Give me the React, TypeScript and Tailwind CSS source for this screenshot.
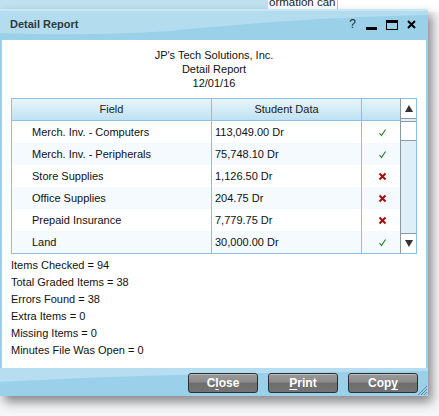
import React from "react";

const rows = [
  { f: "Merch. Inv. - Computers", d: "113,049.00 Dr", ok: true },
  { f: "Merch. Inv. - Peripherals", d: "75,748.10 Dr", ok: true },
  { f: "Store Supplies", d: "1,126.50 Dr", ok: false },
  { f: "Office Supplies", d: "204.75 Dr", ok: false },
  { f: "Prepaid Insurance", d: "7,779.75 Dr", ok: false },
  { f: "Land", d: "30,000.00 Dr", ok: true },
];

const stats = [
  "Items Checked = 94",
  "Total Graded Items = 38",
  "Errors Found = 38",
  "Extra Items = 0",
  "Missing Items = 0",
  "Minutes File Was Open = 0",
];

function Check() {
  return (
    <svg width="9" height="9" viewBox="0 0 9 9">
      <path d="M1.5 5 L3.5 7.5 L7.5 1.5" fill="none" stroke="#2e7d32" strokeWidth="1.2" />
    </svg>
  );
}
function Cross() {
  return (
    <svg width="9" height="9" viewBox="0 0 9 9">
      <path d="M1.5 1.5 L7.5 7.5 M7.5 1.5 L1.5 7.5" fill="none" stroke="#a80d0d" strokeWidth="2" />
    </svg>
  );
}

function Btn({ pre, u, post }: { pre: string; u: string; post: string }) {
  return (
    <div className="w-[70px] h-[20px] rounded-[3px] border border-[#2f2f2f] bg-[linear-gradient(to_bottom,#9a9a9a_0%,#8a8a8a_45%,#6e6e6e_50%,#737373_100%)] shadow-[inset_0_1px_0_rgba(255,255,255,0.35)] flex items-center justify-center text-white font-bold text-[12px] leading-none">
      <span>
        {pre}
        <span className="underline underline-offset-2">{u}</span>
        {post}
      </span>
    </div>
  );
}

export default function App() {
  return (
    <div
      className="relative w-[439px] h-[416px] overflow-hidden bg-[#f4f6f7]"
      style={{ fontFamily: '"Liberation Sans", Arial, sans-serif' }}
    >
      {/* desktop behind */}
      <div className="absolute left-0 top-0 w-[439px] h-[12px] bg-[#bfe1f0]" />
      <div className="absolute left-[268px] top-0 w-[70px] h-[12px] bg-white border-r border-[#9bcbe2] overflow-hidden">
        <div className="whitespace-nowrap text-[11.5px] leading-[12px] text-[#222] -mt-[4px] pl-[1px]">ormation can</div>
      </div>
      <div className="absolute left-[338px] top-0 w-[101px] h-[12px] bg-white" />

      {/* window */}
      <div className="absolute left-0 top-[9px] w-[428px] h-[387px] flex flex-col bg-[#9ad0ea] shadow-[4px_6px_10px_rgba(0,0,0,0.45)]">
        {/* title bar */}
        <div className="relative h-[31px] shrink-0 flex items-center pl-[10px] pr-[12px] overflow-hidden">
          <svg className="absolute inset-0" width="428" height="31" viewBox="0 0 428 31" preserveAspectRatio="none">
            <rect width="428" height="31" fill="#9bd0e9" />
            <path d="M0 0 H428 V6 C330 8 250 14 170 22 C110 26 50 26 0 24 Z" fill="#b3dcef" />
            <path d="M0 0 H428 V2 H0 Z" fill="#c6e7f4" />
          </svg>
          <span className="relative text-[11px] font-bold text-[#2e3a40]">Detail Report</span>
          <div className="relative ml-auto flex items-center">
            <span className="text-[12px] text-[#222] mr-[10px] -mt-[2px]">?</span>
            <div className="w-[11px] h-[3px] bg-black mt-[8px] mr-[9px]" />
            <div className="w-[12px] h-[10px] border border-black border-t-[3px] mr-[9px]" />
            <svg width="9" height="9" viewBox="0 0 9 9">
              <path d="M1 1 L8 8 M8 1 L1 8" stroke="black" strokeWidth="2" />
            </svg>
          </div>
        </div>

        {/* content */}
        <div className="mx-[2px] bg-white h-[328px] shrink-0 flex flex-col">
          <div className="pt-[8px] text-center text-[11px] leading-[14px] text-[#111]">
            <div>JP's Tech Solutions, Inc.</div>
            <div>Detail Report</div>
            <div>12/01/16</div>
          </div>

          <div className="ml-[9px] mt-[8px] w-[406px] h-[156px] border border-[#87c2e2] flex">
            <div className="flex-1 flex flex-col">
              <div className="h-[22px] shrink-0 flex bg-[linear-gradient(to_bottom,#e8f5fb,#bfe1f2)] border-b border-[#87c2e2] text-[11px] text-[#222]">
                <div className="w-[200px] border-r border-[#87c2e2] flex items-center justify-center">Field</div>
                <div className="w-[150px] border-r border-[#87c2e2] flex items-center justify-center">Student Data</div>
                <div className="flex-1" />
              </div>
              {rows.map((r, i) => (
                <div
                  key={i}
                  className={`h-[22px] shrink-0 flex text-[11px] text-[#111] ${i % 2 === 1 ? "bg-[#f4fafd]" : "bg-white"}`}
                >
                  <div className="w-[200px] border-r border-[#87c2e2] flex items-center pl-[20px]">{r.f}</div>
                  <div className="w-[150px] border-r border-[#87c2e2] flex items-center pl-[3px]">{r.d}</div>
                  <div className="flex-1 flex items-center justify-center pl-[2px]">{r.ok ? <Check /> : <Cross />}</div>
                </div>
              ))}
            </div>
            {/* scrollbar */}
            <div className="w-[16px] shrink-0 flex flex-col bg-[#dfeff7] border-l border-[#8a9aa3]">
              <div className="h-[20px] bg-white border-b border-[#8a9aa3] flex items-center justify-center">
                <svg width="8" height="7" viewBox="0 0 8 7"><path d="M4 0 L8 7 H0 Z" fill="#333" /></svg>
              </div>
              <div className="h-[20px] mt-[2px] bg-white border-y border-[#8a9aa3]" />
              <div className="flex-1" />
              <div className="h-[20px] bg-white border-t border-[#8a9aa3] flex items-center justify-center">
                <svg width="8" height="7" viewBox="0 0 8 7"><path d="M0 0 H8 L4 7 Z" fill="#333" /></svg>
              </div>
            </div>
          </div>

          <div className="pl-[9px] pt-[3px] text-[11px] text-[#111]">
            {stats.map((s) => (
              <div key={s} className="h-[17px] leading-[17px]">{s}</div>
            ))}
          </div>
        </div>

        {/* footer */}
        <div className="relative flex-1 flex items-center justify-end gap-[10px] pr-[10px] overflow-hidden">
          <svg className="absolute inset-0" width="428" height="28" viewBox="0 0 428 28" preserveAspectRatio="none">
            <rect width="428" height="28" fill="#9ad0ea" />
            <path d="M0 0 H428 V3 C300 4 150 6 0 14 Z" fill="#b7def0" />
          </svg>
          <div className="relative flex gap-[10px] mt-[2px]">
            <Btn pre="C" u="l" post="ose" />
            <Btn pre="" u="P" post="rint" />
            <Btn pre="Cop" u="y" post="" />
          </div>
          <svg className="absolute right-[1px] bottom-[1px]" width="10" height="10" viewBox="0 0 10 10">
            <path d="M10 1 L1 10 M10 4 L4 10 M10 7 L7 10" stroke="#5a8aa0" strokeWidth="1" />
          </svg>
        </div>
      </div>
    </div>
  );
}
